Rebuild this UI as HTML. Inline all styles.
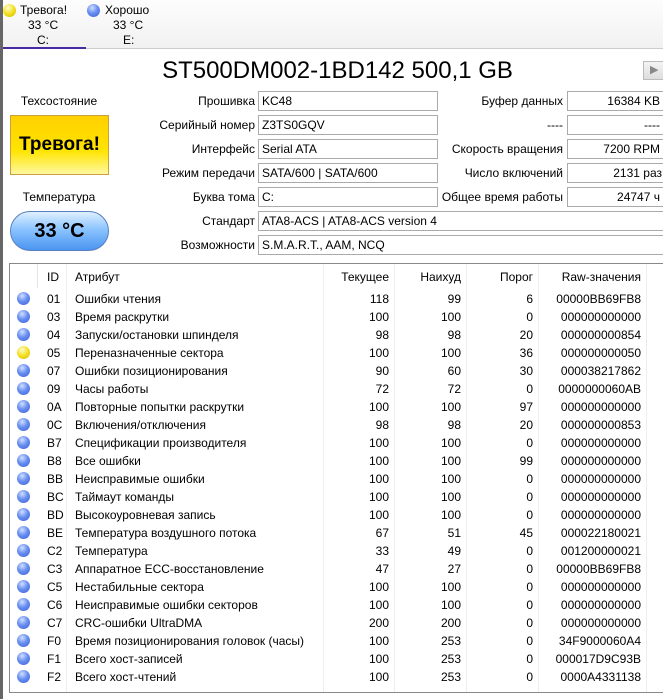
<!DOCTYPE html>
<html><head><meta charset="utf-8"><style>
*{margin:0;padding:0;box-sizing:border-box}
body{width:663px;height:699px;overflow:hidden;background:#fff;font-family:"Liberation Sans","DejaVu Sans",sans-serif;font-size:12px;color:#000;position:relative}
.a{position:absolute;white-space:nowrap}
.lbl{position:absolute;text-align:right;white-space:nowrap}
.box{position:absolute;border:1px solid #aaa;height:20px;line-height:18px;padding:0 3px;background:#fff;white-space:nowrap;overflow:hidden}
.dot{position:absolute;width:13px;height:13px;border-radius:50%;background:radial-gradient(circle at 40% 30%,#cfe0ff 0,#6a8ff0 45%,#3a5fd8 100%)}
.dot.y{background:radial-gradient(circle at 40% 30%,#fffbd0 0,#f3e020 50%,#d0b800 100%)}
.r{position:absolute;height:18px;line-height:18px;left:0;width:663px}
.r span{position:absolute;white-space:nowrap}
</style></head><body>
<div class="a" style="left:0;top:0;width:663px;height:49px;background:linear-gradient(#fdfdfd,#f1f1f1);border-bottom:1px solid #ccc"></div>
<div class="a" style="left:3px;top:47px;width:83px;height:2px;background:#4a2aa0"></div>
<div class="a" style="left:0;top:0;width:3px;height:699px;background:#666"></div>
<div class="dot y" style="left:3px;top:4px"></div>
<div class="a" style="left:20px;top:3px">Тревога!</div>
<div class="a" style="left:28px;top:18px">33 °C</div>
<div class="a" style="left:37px;top:33px">C:</div>
<div class="dot" style="left:87px;top:4px"></div>
<div class="a" style="left:105px;top:3px">Хорошо</div>
<div class="a" style="left:113px;top:18px">33 °C</div>
<div class="a" style="left:123px;top:33px">E:</div>

<div class="a" style="left:0;width:675px;text-align:center;top:57px;font-size:24px">ST500DM002-1BD142 500,1 GB</div>
<div class="a" style="left:643px;top:61px;width:22px;height:19px;background:linear-gradient(#f4f4f4,#ddd);border:1px solid #bbb;color:#888;font-size:11px;line-height:17px;padding-left:6px">▶</div>

<div class="a" style="left:0;width:118px;text-align:center;top:94px">Техсостояние</div>
<div class="a" style="left:10px;top:115px;width:99px;height:60px;border:1px solid #c9a040;background:linear-gradient(#ffd000,#ffe400 60%,#fff8a0);text-align:center;line-height:58px;font-weight:bold;font-size:19px">Тревога!</div>
<div class="a" style="left:0;width:118px;text-align:center;top:190px">Температура</div>
<div class="a" style="left:10px;top:211px;width:99px;height:40px;border-radius:20px;border:1px solid #5a7fc0;background:linear-gradient(#dff0ff,#8cc4ff 45%,#4a94f0 100%);text-align:center;line-height:38px;font-weight:bold;font-size:20px">33 °C</div>

<div class="lbl" style="right:408px;top:94px">Прошивка</div><div class="box" style="left:258px;top:91px;width:180px">KC48</div>
<div class="lbl" style="right:408px;top:118px">Серийный номер</div><div class="box" style="left:258px;top:115px;width:180px">Z3TS0GQV</div>
<div class="lbl" style="right:408px;top:142px">Интерфейс</div><div class="box" style="left:258px;top:139px;width:180px">Serial ATA</div>
<div class="lbl" style="right:408px;top:166px">Режим передачи</div><div class="box" style="left:258px;top:163px;width:180px">SATA/600 | SATA/600</div>
<div class="lbl" style="right:408px;top:190px">Буква тома</div><div class="box" style="left:258px;top:187px;width:180px">C:</div>
<div class="lbl" style="right:408px;top:214px">Стандарт</div><div class="box" style="left:258px;top:211px;width:410px">ATA8-ACS | ATA8-ACS version 4</div>
<div class="lbl" style="right:408px;top:238px">Возможности</div><div class="box" style="left:258px;top:235px;width:410px">S.M.A.R.T., AAM, NCQ</div>

<div class="lbl" style="right:100px;top:94px">Буфер данных</div><div class="box" style="left:567px;top:91px;width:100px;text-align:right;padding-right:6px">16384 KB</div>
<div class="lbl" style="right:100px;top:118px">----</div><div class="box" style="left:567px;top:115px;width:100px;text-align:right;padding-right:6px">----</div>
<div class="lbl" style="right:100px;top:142px">Скорость вращения</div><div class="box" style="left:567px;top:139px;width:100px;text-align:right;padding-right:6px">7200 RPM</div>
<div class="lbl" style="right:100px;top:166px">Число включений</div><div class="box" style="left:567px;top:163px;width:100px;text-align:right;padding-right:4px">2131 раз</div>
<div class="lbl" style="right:100px;top:190px">Общее время работы</div><div class="box" style="left:567px;top:187px;width:100px;text-align:right;padding-right:6px">24747 ч</div>

<div class="a" style="left:9px;top:263px;width:660px;height:430px;border:1px solid #888"></div>
<div class="a" style="left:37px;top:264px;width:1px;height:24px;background:#e4e4e4"></div>
<div class="a" style="left:323px;top:264px;width:1px;height:428px;background:#eee"></div>
<div class="a" style="left:394px;top:264px;width:1px;height:428px;background:#eee"></div>
<div class="a" style="left:466px;top:264px;width:1px;height:428px;background:#eee"></div>
<div class="a" style="left:538px;top:264px;width:1px;height:428px;background:#eee"></div>
<div class="a" style="left:646px;top:264px;width:1px;height:428px;background:#eee"></div>
<div class="a" style="left:66px;top:264px;width:1px;height:428px;background:#eee"></div>

<div id="t"></div>
<script>
var rows=[["ID","Атрибут","Текущее","Наихуд","Порог","Raw-значения",""],
["01","Ошибки чтения","118","99","6","00000BB69FB8","b"],
["03","Время раскрутки","100","100","0","000000000000","b"],
["04","Запуски/остановки шпинделя","98","98","20","000000000854","b"],
["05","Переназначенные сектора","100","100","36","000000000050","y"],
["07","Ошибки позиционирования","90","60","30","000038217862","b"],
["09","Часы работы","72","72","0","0000000060AB","b"],
["0A","Повторные попытки раскрутки","100","100","97","000000000000","b"],
["0C","Включения/отключения","98","98","20","000000000853","b"],
["B7","Спецификации производителя","100","100","0","000000000000","b"],
["B8","Все ошибки","100","100","99","000000000000","b"],
["BB","Неисправимые ошибки","100","100","0","000000000000","b"],
["BC","Таймаут команды","100","100","0","000000000000","b"],
["BD","Высокоуровневая запись","100","100","0","000000000000","b"],
["BE","Температура воздушного потока","67","51","45","000022180021","b"],
["C2","Температура","33","49","0","001200000021","b"],
["C3","Аппаратное ECC-восстановление","47","27","0","00000BB69FB8","b"],
["C5","Нестабильные сектора","100","100","0","000000000000","b"],
["C6","Неисправимые ошибки секторов","100","100","0","000000000000","b"],
["C7","CRC-ошибки UltraDMA","200","200","0","000000000000","b"],
["F0","Время позиционирования головок (часы)","100","253","0","34F9000060A4","b"],
["F1","Всего хост-записей","100","253","0","000017D9C93B","b"],
["F2","Всего хост-чтений","100","253","0","0000A4331138","b"]];
var h="";
rows.forEach(function(r,i){
 var top=i==0?268:290+(i-1)*18;
 h+='<div class="r" style="top:'+top+'px">';
 if(r[6])h+='<div class="dot'+(r[6]=="y"?" y":"")+'" style="left:17px;top:2px"></div>';
 h+='<span style="left:47px">'+r[0]+'</span><span style="left:75px">'+r[1]+'</span>';
 h+='<span style="right:274px">'+r[2]+'</span><span style="right:202px">'+r[3]+'</span><span style="right:130px">'+r[4]+'</span><span style="right:22px">'+r[5]+'</span></div>';
});
document.getElementById("t").innerHTML=h;
</script>
</body></html>
